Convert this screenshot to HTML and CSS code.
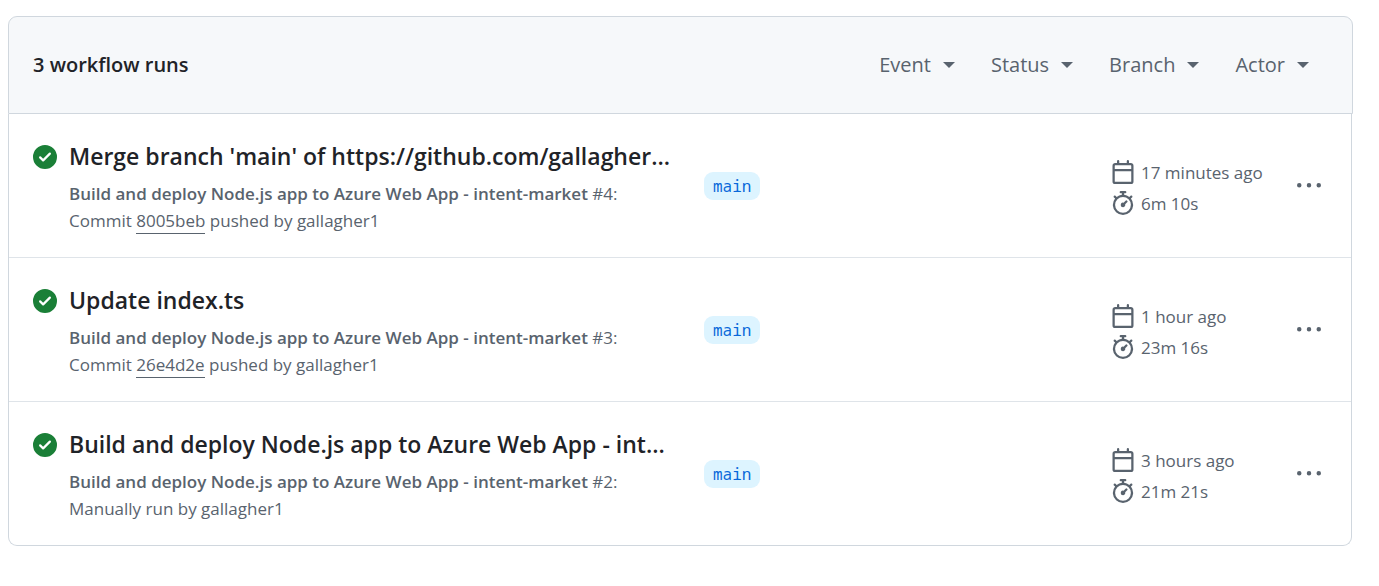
FILE: index.html
```html
<!DOCTYPE html>
<html lang="en">
<head>
<meta charset="utf-8">
<title>Workflow runs</title>
<link rel="stylesheet" href="styles.css">
</head>
<body>
<svg class="sprite" aria-hidden="true">
  <symbol id="check" viewBox="0 0 16 16"><path d="M8 16A8 8 0 1 1 8 0a8 8 0 0 1 0 16Zm3.78-9.72a.751.751 0 0 0-.018-1.042.751.751 0 0 0-1.042-.018L6.75 9.19 5.28 7.72a.751.751 0 0 0-1.042.018.751.751 0 0 0-.018 1.042l2 2a.75.75 0 0 0 1.06 0Z"/></symbol>
  <symbol id="calendar" viewBox="0 0 16 16"><path d="M4.75 0a.75.75 0 0 1 .75.75V2h5V.75a.75.75 0 0 1 1.5 0V2h1.25c.966 0 1.75.784 1.75 1.75v10.5A1.75 1.75 0 0 1 13.25 16H2.75A1.75 1.75 0 0 1 1 14.25V3.75C1 2.784 1.784 2 2.75 2H4V.75A.75.75 0 0 1 4.75 0ZM2.5 7.5v6.75c0 .138.112.25.25.25h10.5a.25.25 0 0 0 .25-.25V7.5Zm10.75-4H2.75a.25.25 0 0 0-.25.25V6h11V3.75a.25.25 0 0 0-.25-.25Z"/></symbol>
  <symbol id="stopwatch" viewBox="0 0 16 16"><path d="M5.75.75A.75.75 0 0 1 6.5 0h3a.75.75 0 0 1 0 1.5h-.75v1l-.001.041a6.724 6.724 0 0 1 3.464 1.435l.007-.006.75-.75a.749.749 0 0 1 1.275.326.749.749 0 0 1-.215.734l-.75.75-.006.007a6.75 6.75 0 1 1-10.548 0L2.72 5.03l-.75-.75a.751.751 0 0 1 .018-1.042.751.751 0 0 1 1.042-.018l.75.75.007.006A6.72 6.72 0 0 1 7.25 2.541V1.5H6.5a.75.75 0 0 1-.75-.75ZM8 14.5a5.25 5.25 0 1 0-.001-10.501A5.25 5.25 0 0 0 8 14.5Zm.389-6.7 1.33-1.33a.75.75 0 1 1 1.061 1.06L9.45 8.861A1.503 1.503 0 0 1 8 10.75a1.499 1.499 0 1 1 .389-2.95Z"/></symbol>
  <symbol id="kebab" viewBox="0 0 16 16"><path d="M8 9a1.5 1.5 0 1 0 0-3 1.5 1.5 0 0 0 0 3ZM1.5 9a1.5 1.5 0 1 0 0-3 1.5 1.5 0 0 0 0 3Zm13 0a1.5 1.5 0 1 0 0-3 1.5 1.5 0 0 0 0 3Z"/></symbol>
</svg>
<main class="runs">
  <header class="runs-header">
    <h2 class="runs-count">3 workflow runs</h2>
    <div class="filters">
      <button class="filter" type="button">Event<span class="caret"></span></button>
      <button class="filter" type="button">Status<span class="caret"></span></button>
      <button class="filter" type="button">Branch<span class="caret"></span></button>
      <button class="filter" type="button">Actor<span class="caret"></span></button>
    </div>
  </header>
  <div class="run-list">
    <article class="run">
      <svg class="icon success" role="img" aria-label="Success"><use href="#check"/></svg>
      <div class="info">
        <a class="title" href="#">Merge branch 'main' of https://github.com/gallagher…</a>
        <div class="detail"><b class="workflow">Build and deploy Node.js app to Azure Web App - intent-market</b> #4:</div>
        <div class="detail">Commit <a class="commit" href="#">8005beb</a> pushed by gallagher1</div>
      </div>
      <div class="branch-cell"><a class="branch" href="#">main</a></div>
      <div class="meta">
        <div class="meta-line"><svg class="icon" aria-hidden="true"><use href="#calendar"/></svg>17 minutes ago</div>
        <div class="meta-line"><svg class="icon" aria-hidden="true"><use href="#stopwatch"/></svg>6m 10s</div>
      </div>
      <button class="more" type="button" aria-label="Show options"><svg class="icon" aria-hidden="true"><use href="#kebab"/></svg></button>
    </article>
    <article class="run">
      <svg class="icon success" role="img" aria-label="Success"><use href="#check"/></svg>
      <div class="info">
        <a class="title" href="#">Update index.ts</a>
        <div class="detail"><b class="workflow">Build and deploy Node.js app to Azure Web App - intent-market</b> #3:</div>
        <div class="detail">Commit <a class="commit" href="#">26e4d2e</a> pushed by gallagher1</div>
      </div>
      <div class="branch-cell"><a class="branch" href="#">main</a></div>
      <div class="meta">
        <div class="meta-line"><svg class="icon" aria-hidden="true"><use href="#calendar"/></svg>1 hour ago</div>
        <div class="meta-line"><svg class="icon" aria-hidden="true"><use href="#stopwatch"/></svg>23m 16s</div>
      </div>
      <button class="more" type="button" aria-label="Show options"><svg class="icon" aria-hidden="true"><use href="#kebab"/></svg></button>
    </article>
    <article class="run">
      <svg class="icon success" role="img" aria-label="Success"><use href="#check"/></svg>
      <div class="info">
        <a class="title" href="#">Build and deploy Node.js app to Azure Web App - int…</a>
        <div class="detail"><b class="workflow">Build and deploy Node.js app to Azure Web App - intent-market</b> #2:</div>
        <div class="detail">Manually run by gallagher1</div>
      </div>
      <div class="branch-cell"><a class="branch" href="#">main</a></div>
      <div class="meta">
        <div class="meta-line"><svg class="icon" aria-hidden="true"><use href="#calendar"/></svg>3 hours ago</div>
        <div class="meta-line"><svg class="icon" aria-hidden="true"><use href="#stopwatch"/></svg>21m 21s</div>
      </div>
      <button class="more" type="button" aria-label="Show options"><svg class="icon" aria-hidden="true"><use href="#kebab"/></svg></button>
    </article>
  </div>
</main>
</body>
</html>
```
FILE: styles.css
```css
* { box-sizing: border-box; }

body {
  margin: 0;
  padding: 16px 26px 16px 8px;
  background: #fff;
  color: #1f2328;
  font-family: "Segoe UI", "Open Sans", "Noto Sans", sans-serif;
}

.sprite { display: none; }

.icon {
  display: block;
  flex: none;
  width: 24px;
  height: 24px;
  fill: currentColor;
}

.runs-header {
  display: flex;
  align-items: center;
  justify-content: space-between;
  padding: 32px 43px 32px 24px;
  background: #f6f8fa;
  border: 1px solid #d0d7de;
  border-radius: 9px 9px 0 0;
}

.runs-count {
  margin: 0;
  font-size: 20px;
  font-weight: 600;
  line-height: 32px;
}

.filters {
  display: flex;
  gap: 36px;
}

.filter {
  display: flex;
  align-items: center;
  gap: 12px;
  padding: 0;
  border: 0;
  background: none;
  color: #59636e;
  font: inherit;
  font-size: 20px;
  line-height: 32px;
}

.caret {
  border: 6px solid transparent;
  border-top-color: currentColor;
  border-bottom: 0;
}

.run-list {
  margin-right: 1px;
  border: 1px solid #d0d7de;
  border-top: 0;
  border-radius: 0 0 9px 9px;
}

.run {
  display: grid;
  grid-template-columns: 36px minmax(0, 635fr) minmax(0, 407fr) 180px 36px;
  align-items: center;
  padding: 24px 24px 23px;
}

.run + .run { border-top: 1px solid #dfe4e9; }

.success {
  align-self: start;
  margin-top: 7px;
  color: #1a7f37;
}

.info { padding-right: 32px; }

.title {
  display: block;
  margin-bottom: 6px;
  overflow: hidden;
  color: #1f2328;
  font-size: 23px;
  font-weight: 600;
  line-height: 36px;
  text-decoration: none;
  text-overflow: ellipsis;
  white-space: nowrap;
}

.detail {
  color: #59636e;
  font-size: 17px;
  line-height: 27px;
  white-space: nowrap;
}

.workflow { font-weight: 600; }

.commit {
  display: inline-block;
  border-bottom: 1px solid currentColor;
  color: inherit;
  line-height: 24px;
  text-decoration: none;
}

.branch-cell { display: flex; }

.branch {
  padding: 0 9px;
  border-radius: 9px;
  background: #ddf4ff;
  color: #0969da;
  font-family: Consolas, "Noto Sans Mono", "DejaVu Sans Mono", monospace;
  font-size: 16px;
  line-height: 28px;
  text-decoration: none;
}

.meta { padding-top: 3px; }

.meta-line {
  display: flex;
  align-items: center;
  gap: 6px;
  color: #59636e;
  font-size: 17px;
  line-height: 31px;
}

.more {
  display: flex;
  justify-content: center;
  padding: 6px;
  border: 0;
  background: none;
  color: #59636e;
}
```
